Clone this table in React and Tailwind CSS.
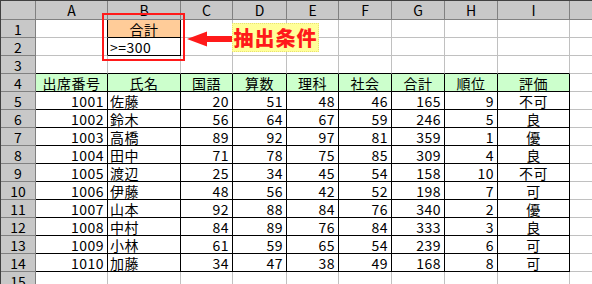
import React from 'react';

const cols = ['A', 'B', 'C', 'D', 'E', 'F', 'G', 'H', 'I'];

const students = [
  ['1001', '佐藤', 20, 51, 48, 46, 165, 9, '不可'],
  ['1002', '鈴木', 56, 64, 67, 59, 246, 5, '良'],
  ['1003', '高橋', 89, 92, 97, 81, 359, 1, '優'],
  ['1004', '田中', 71, 78, 75, 85, 309, 4, '良'],
  ['1005', '渡辺', 25, 34, 45, 54, 158, 10, '不可'],
  ['1006', '伊藤', 48, 56, 42, 52, 198, 7, '可'],
  ['1007', '山本', 92, 88, 84, 76, 340, 2, '優'],
  ['1008', '中村', 84, 89, 76, 84, 333, 3, '良'],
  ['1009', '小林', 61, 59, 65, 54, 239, 6, '可'],
  ['1010', '加藤', 34, 47, 38, 49, 168, 8, '可'],
];

const heads = ['出席番号', '氏名', '国語', '算数', '理科', '社会', '合計', '順位', '評価'];

// sheet contents, row 1..15
const sheet = {};
sheet['1-1'] = { text: '合計', align: 'center', bg: 'bg-[#ffcc99]' };
sheet['2-1'] = { text: '>=300', align: 'left' };
heads.forEach((h, c) => (sheet[`4-${c}`] = { text: h, align: 'center', bg: 'bg-[#ccffcc]' }));
students.forEach((s, i) => {
  s.forEach((v, c) => {
    sheet[`${i + 5}-${c}`] = {
      text: String(v),
      align: c === 1 ? 'left' : c === 8 ? 'center' : 'right',
    };
  });
});

const inTable = (r, c) => r >= 4 && r <= 14 && c >= 0 && c <= 8;
const inCriteria = (r, c) => (r === 1 || r === 2) && c === 1;

function Cell({ r, c }) {
  const data = sheet[`${r}-${c}`];
  // right border black if this cell or the one on its right is bordered
  const blackRight = inTable(r, c) || inTable(r, c + 1) || inCriteria(r, c) || inCriteria(r, c + 1);
  const blackBottom = inTable(r, c) || inTable(r + 1, c) || inCriteria(r, c) || inCriteria(r + 1, c);
  const align =
    data?.align === 'center' ? 'justify-center' : data?.align === 'left' ? 'justify-start pl-[2px]' : 'justify-end pr-[3px]';
  return (
    <div
      className={`flex items-center pt-[1px] overflow-hidden whitespace-nowrap border-r border-b tracking-[0.5px] ${
        blackRight ? 'border-r-black' : 'border-r-[#c0c0c0]'
      } ${blackBottom ? 'border-b-black' : 'border-b-[#c0c0c0]'} ${data?.bg || 'bg-white'} ${align}`}
    >
      {data?.text}
    </div>
  );
}

export default function App() {
  const rows = Array.from({ length: 15 }, (_, i) => i + 1);
  return (
    <div
      className="relative w-[592px] h-[284px] overflow-hidden bg-white border-l border-t border-[#404040] text-[14px] leading-[16px] text-black"
      style={{ fontFamily: '"Noto Sans CJK JP", "Liberation Sans", sans-serif' }}
    >
      <div className="grid grid-cols-[35px_72px_73px_52px_54px_52px_53px_53px_53px_72px_40px] grid-rows-[19px_repeat(15,18px)]">
        {/* column header */}
        <div className="bg-[#c8c8c8] border-r border-b border-[#808080]" />
        {cols.map((c) => (
          <div
            key={c}
            className="flex items-center justify-center bg-[#c8c8c8] border-r border-b border-[#808080]"
          >
            {c}
          </div>
        ))}
        <div className="bg-[#c8c8c8] border-b border-[#808080]" />

        {rows.map((r) => (
          <React.Fragment key={r}>
            <div className="flex items-center justify-center pt-[1px] bg-[#c8c8c8] border-r border-b border-[#808080]">
              {r}
            </div>
            {cols.map((_, c) => (
              <Cell key={c} r={r} c={c} />
            ))}
            <div className="border-b border-[#c0c0c0]" />
          </React.Fragment>
        ))}
      </div>

      {/* red frame around the criteria range */}
      <div className="absolute left-[101px] top-[12px] w-[83px] h-[48px] border-2 border-[#ff1a1a]" />

      {/* arrow */}
      <svg className="absolute left-[185px] top-[29px]" width="48" height="18" viewBox="0 0 48 18">
        <polygon points="1,9 21,1.5 21,6 48,6 48,12 21,12 21,16.5" fill="#ff1a1a" />
      </svg>

      {/* label */}
      <div className="absolute left-[231px] top-[22px] w-[87px] h-[29px] flex items-center justify-center bg-[#ffff99] border border-dotted border-[#e8e070]">
        <span className="text-[20px] leading-[24px] font-black text-[#ff1a1a] tracking-[1px]">抽出条件</span>
      </div>
    </div>
  );
}
